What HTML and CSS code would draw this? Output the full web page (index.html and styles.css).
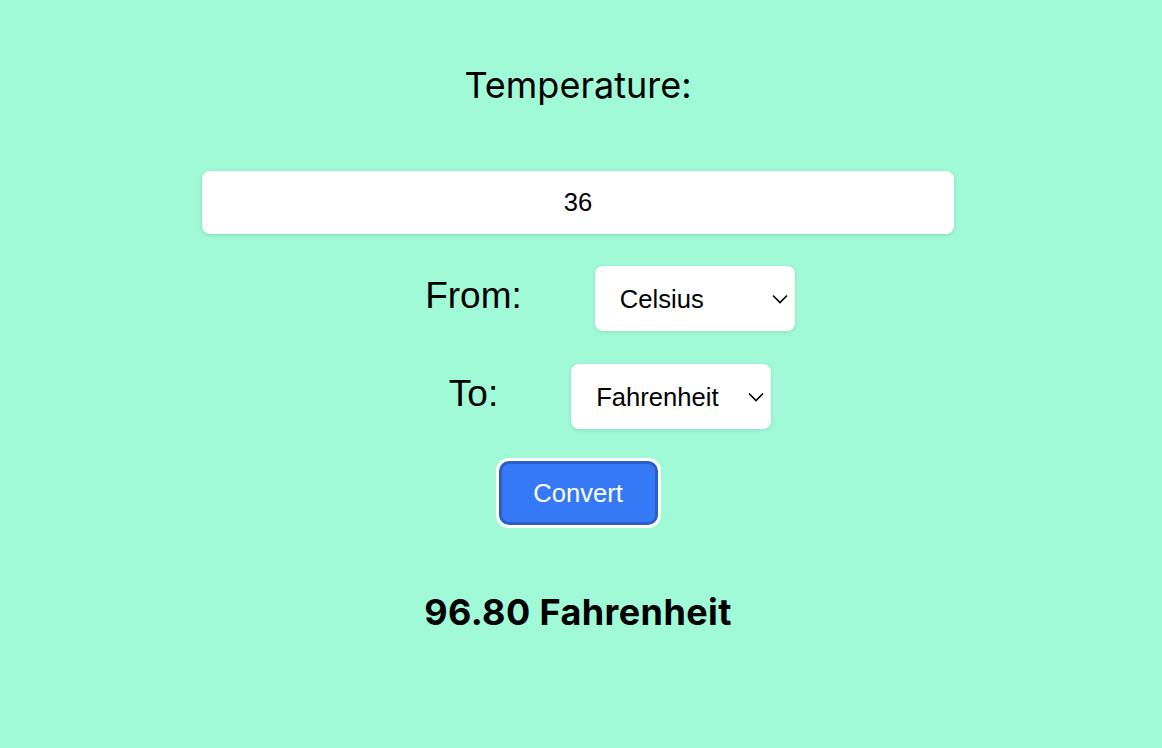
FILE: index.html
```html
<!DOCTYPE html>
<html>
<head>
<meta charset="utf-8">
<link rel="stylesheet" href="styles.css">
</head>
<body>
<main class="app">
  <h1 class="title">Temperature:</h1>
  <input class="temp-input" type="text" value="36">
  <div class="row">
    <label class="row-label">From:</label>
    <select class="unit-select">
      <option selected>Celsius</option>
      <option>Fahrenheit</option>
      <option>Kelvin</option>
    </select>
  </div>
  <div class="row">
    <label class="row-label">To:</label>
    <select class="unit-select">
      <option>Celsius</option>
      <option selected>Fahrenheit</option>
      <option>Kelvin</option>
    </select>
  </div>
  <button class="convert-btn">Convert</button>
  <p class="result">96.80 Fahrenheit</p>
</main>
</body>
</html>
```
FILE: styles.css
```css
html, body {
  margin: 0;
  padding: 0;
  background: #a0fad7;
}
body {
  height: 748px;
  font-family: "Liberation Sans", Arial, sans-serif;
  color: #000;
}
.app {
  display: flex;
  flex-direction: column;
  align-items: center;
  padding-right: 6px;
}
.title {
  margin: 63px 0 0;
  font-family: Inter, "Noto Sans", sans-serif;
  font-weight: 400;
  font-size: 36px;
  line-height: 44px;
}
.temp-input {
  box-sizing: border-box;
  margin-top: 64px;
  width: 752px;
  height: 63px;
  border: none;
  border-radius: 8px;
  background: #fff;
  box-shadow: 0 1px 4px rgba(0, 0, 0, 0.15);
  text-align: center;
  font-family: "Liberation Sans", Arial, sans-serif;
  font-size: 25.6px;
  color: #000;
  outline: none;
}
.row {
  display: flex;
  align-items: center;
  margin-top: 32px;
  padding-left: 64px;
}
.row + .row {
  margin-top: 33px;
}
.row-label {
  margin-right: 73px;
  margin-bottom: 6px;
  font-size: 37px;
  line-height: 1;
}
.unit-select {
  box-sizing: border-box;
  width: 200px;
  height: 65px;
  padding: 0 0 0 25px;
  border: none;
  border-radius: 8px;
  background-color: #fff;
  background-image: url("data:image/svg+xml;utf8,<svg xmlns='http://www.w3.org/2000/svg' width='16' height='10' viewBox='0 0 16 10'><path d='M1 1.5 L8 8.5 L15 1.5' fill='none' stroke='black' stroke-width='1.6'/></svg>");
  background-repeat: no-repeat;
  background-position: right 7px center;
  box-shadow: 0 1px 4px rgba(0, 0, 0, 0.12);
  -webkit-appearance: none;
  appearance: none;
  font-family: "Liberation Sans", Arial, sans-serif;
  font-size: 25.6px;
  color: #000;
}
.convert-btn {
  box-sizing: border-box;
  margin-top: 32px;
  width: 159px;
  height: 64px;
  border: 3px solid #2c5ec8;
  border-radius: 10px;
  background: #3579f6;
  box-shadow: 0 0 0 3px #fff;
  color: #fff;
  font-family: "Liberation Sans", Arial, sans-serif;
  font-size: 25.6px;
  cursor: pointer;
}
.result {
  margin: 66px 0 0;
  font-family: Inter, "Noto Sans", sans-serif;
  font-weight: 700;
  font-size: 36px;
  letter-spacing: 0.4px;
  line-height: 42px;
}
```
